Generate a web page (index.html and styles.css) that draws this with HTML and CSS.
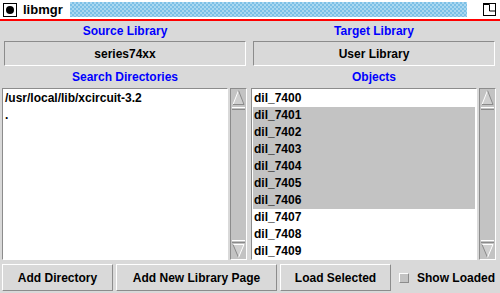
FILE: index.html
```html
<!DOCTYPE html>
<html>
<head>
<meta charset="utf-8">
<title>libmgr</title>
<link rel="stylesheet" href="styles.css">
</head>
<body>
<div class="titlebar">
  <span class="ticon"><span class="dot"></span></span>
  <span class="title">libmgr</span>
  <span class="pattern"></span>
  <svg class="maxicon" width="13" height="13" viewBox="0 0 13 13">
    <rect x="0.5" y="0.5" width="12" height="12" fill="none" stroke="#000"/>
    <path d="M1 1.5H6.5V8H12" fill="none" stroke="#000"/>
  </svg>
</div>
<div class="main">
  <div class="col">
    <div class="label lbl-top">Source Library</div>
    <div class="selbtn">series74xx</div>
    <div class="label lbl-mid">Search Directories</div>
    <div class="listwrap">
      <div class="list">
        <div class="row">/usr/local/lib/xcircuit-3.2</div>
        <div class="row">.</div>
      </div>
      <div class="scrollbar">
        <svg class="arrow" width="15" height="22" viewBox="0 0 15 22">
          <polygon points="2,15.5 7.5,1.5 13,15.5" fill="#cfcfcf"/>
          <line x1="2" y1="15.5" x2="7.5" y2="1.5" stroke="#fff"/>
          <line x1="7.5" y1="1.5" x2="13" y2="15.5" stroke="#8a8a8a"/>
          <line x1="2" y1="15.5" x2="13" y2="15.5" stroke="#8a8a8a"/>
          <line x1="1" y1="18.5" x2="14" y2="18.5" stroke="#fff"/>
          <line x1="1" y1="20.5" x2="14" y2="20.5" stroke="#8a8a8a"/>
        </svg>
        <svg class="arrow" width="15" height="20" viewBox="0 0 15 20">
          <line x1="1" y1="1.5" x2="14" y2="1.5" stroke="#fff"/>
          <line x1="1" y1="3.5" x2="14" y2="3.5" stroke="#8a8a8a"/>
          <polygon points="2,5.5 13,5.5 7.5,18.5" fill="#cfcfcf"/>
          <line x1="2" y1="5.5" x2="13" y2="5.5" stroke="#fff"/>
          <line x1="2" y1="5.5" x2="7.5" y2="18.5" stroke="#8a8a8a"/>
          <line x1="13" y1="5.5" x2="7.5" y2="18.5" stroke="#fff"/>
        </svg>
      </div>
    </div>
  </div>
  <div class="col">
    <div class="label lbl-top">Target Library</div>
    <div class="selbtn">User Library</div>
    <div class="label lbl-mid">Objects</div>
    <div class="listwrap">
      <div class="list">
        <div class="row">dil_7400</div>
        <div class="row sel">dil_7401</div>
        <div class="row sel">dil_7402</div>
        <div class="row sel">dil_7403</div>
        <div class="row sel">dil_7404</div>
        <div class="row sel">dil_7405</div>
        <div class="row sel">dil_7406</div>
        <div class="row">dil_7407</div>
        <div class="row">dil_7408</div>
        <div class="row">dil_7409</div>
      </div>
      <div class="scrollbar">
        <svg class="arrow" width="15" height="22" viewBox="0 0 15 22">
          <polygon points="2,15.5 7.5,1.5 13,15.5" fill="#cfcfcf"/>
          <line x1="2" y1="15.5" x2="7.5" y2="1.5" stroke="#fff"/>
          <line x1="7.5" y1="1.5" x2="13" y2="15.5" stroke="#8a8a8a"/>
          <line x1="2" y1="15.5" x2="13" y2="15.5" stroke="#8a8a8a"/>
          <line x1="1" y1="18.5" x2="14" y2="18.5" stroke="#fff"/>
          <line x1="1" y1="20.5" x2="14" y2="20.5" stroke="#8a8a8a"/>
        </svg>
        <svg class="arrow" width="15" height="20" viewBox="0 0 15 20">
          <line x1="1" y1="1.5" x2="14" y2="1.5" stroke="#fff"/>
          <line x1="1" y1="3.5" x2="14" y2="3.5" stroke="#8a8a8a"/>
          <polygon points="2,5.5 13,5.5 7.5,18.5" fill="#cfcfcf"/>
          <line x1="2" y1="5.5" x2="13" y2="5.5" stroke="#fff"/>
          <line x1="2" y1="5.5" x2="7.5" y2="18.5" stroke="#8a8a8a"/>
          <line x1="13" y1="5.5" x2="7.5" y2="18.5" stroke="#fff"/>
        </svg>
      </div>
    </div>
  </div>
</div>
<div class="actions">
  <div class="btn b1">Add Directory</div>
  <div class="btn b2">Add New Library Page</div>
  <div class="btn b3">Load Selected</div>
  <div class="check"><span class="box"></span><span>Show Loaded</span></div>
</div>
</body>
</html>
```
FILE: styles.css
```css
* { box-sizing: border-box; }
html, body { margin: 0; padding: 0; }
body {
  width: 500px;
  height: 293px;
  overflow: hidden;
  background: #d9d9d9;
  color: #000;
  font: bold 12px "Liberation Sans", Arial, sans-serif;
}
.titlebar {
  height: 21px;
  background: #fff;
  border-bottom: 2px solid #ff0000;
  display: flex;
  align-items: center;
  padding: 0 4px 0 3px;
}
.ticon {
  width: 14px;
  height: 14px;
  border: 1px solid #000;
  display: flex;
  align-items: center;
  justify-content: center;
  margin-right: 6px;
}
.dot {
  width: 8px;
  height: 8px;
  border-radius: 50%;
  background: #000;
}
.title {
  font-size: 13px;
  width: 38px;
}
.pattern {
  flex: 1;
  height: 15px;
  margin-left: 9px;
  background: repeating-conic-gradient(#7cc0e6 0 25%, #a9d7f0 0 50%) 0 0 / 4px 4px;
}
.maxicon { margin-left: 16px; display: block; }

.main {
  display: grid;
  grid-template-columns: 246px 246px;
  column-gap: 3px;
  padding: 0 2px;
}
.label {
  color: #0000ff;
  display: flex;
  align-items: center;
  justify-content: center;
}
.lbl-top { height: 20px; }
.lbl-mid { height: 22px; }
.selbtn {
  height: 25px;
  margin: 0 2px;
  border: 1px solid;
  border-color: #8c8c8c #fff #fff #8c8c8c;
  display: flex;
  align-items: center;
  justify-content: center;
}
.listwrap {
  height: 172px;
  display: flex;
  gap: 2px;
}
.list {
  width: 226px;
  background: #fff;
  border: 1px solid;
  border-color: #8c8c8c #fff #fff #8c8c8c;
  padding: 1px;
  overflow: hidden;
}
.row {
  height: 17px;
  line-height: 17px;
  padding-left: 1px;
  white-space: nowrap;
}
.row.sel { background: #c3c3c3; }
.scrollbar {
  width: 17px;
  background: #c3c3c3;
  border: 1px solid;
  border-color: #8c8c8c #fff #fff #8c8c8c;
  display: flex;
  flex-direction: column;
  justify-content: space-between;
}
.arrow { display: block; }

.actions {
  display: flex;
  align-items: center;
  height: 27px;
  margin-top: 4px;
  padding-left: 2px;
  gap: 3px;
}
.btn {
  height: 27px;
  border: 1px solid;
  border-color: #fff #8c8c8c #8c8c8c #fff;
  display: flex;
  align-items: center;
  justify-content: center;
}
.b1 { width: 111px; }
.b2 { width: 161px; }
.b3 { width: 111px; }
.check {
  display: flex;
  align-items: center;
  gap: 8px;
  margin-left: 5px;
}
.box {
  width: 10px;
  height: 10px;
  border: 1px solid;
  border-color: #fff #8c8c8c #8c8c8c #fff;
  background: #c3c3c3;
}
```
